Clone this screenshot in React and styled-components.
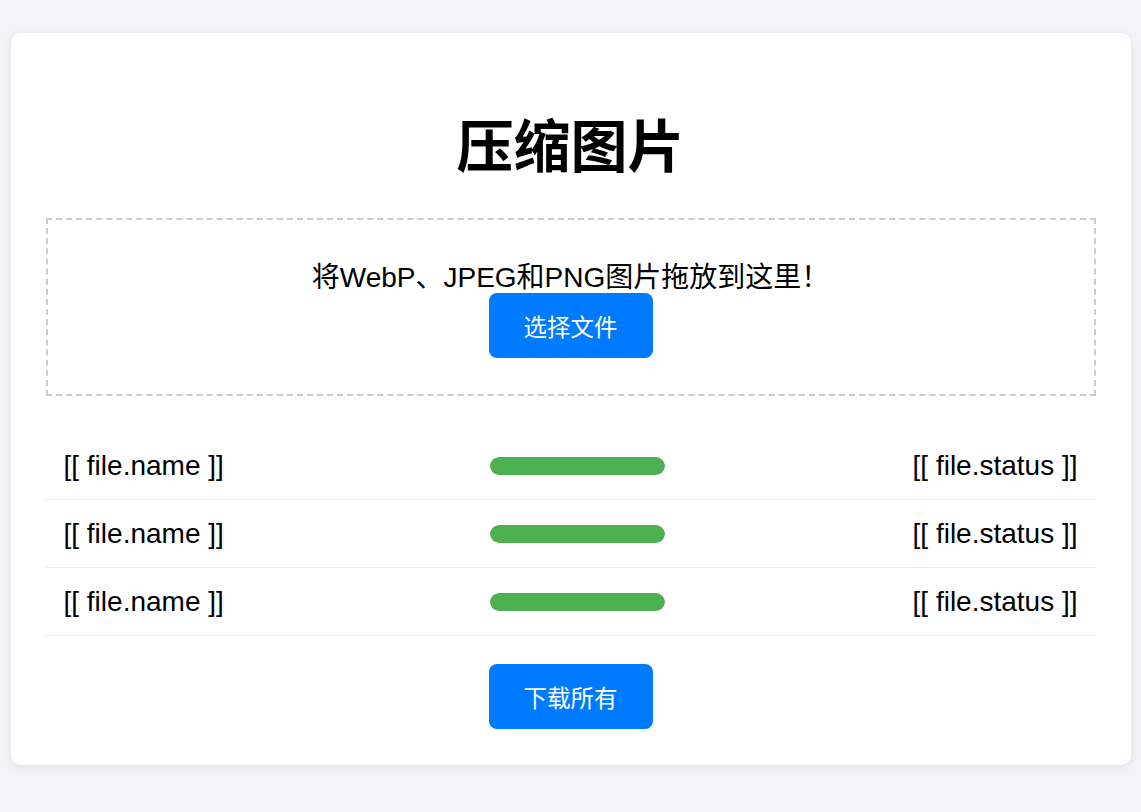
import React from "react";
import styled, { createGlobalStyle } from "styled-components";

const Global = createGlobalStyle`
  html, body {
    margin: 0;
    padding: 0;
    background: #f3f3f7;
  }
  body {
    font-family: "Liberation Sans", "Noto Sans CJK SC", sans-serif;
    color: #000;
  }
`;

const Page = styled.div`
  padding: 33px 0 47px;
`;

const Card = styled.main`
  width: 1120px;
  margin: 0 auto;
  box-sizing: border-box;
  background: #fff;
  border-radius: 10px;
  box-shadow: 0 2px 10px rgba(0, 0, 0, 0.08);
  padding: 45px 35px 36px;
  display: flex;
  flex-direction: column;
`;

const Title = styled.h1`
  margin: 30px 0 42px;
  font-family: "Noto Sans CJK SC", sans-serif;
  font-weight: 700;
  font-size: 57px;
  line-height: 68px;
  text-align: center;
`;

const DropZone = styled.section`
  border: 2px dashed #ccc;
  padding: 43px 20px 36px;
  display: flex;
  flex-direction: column;
  align-items: center;
`;

const DropText = styled.p`
  margin: 0;
  font-size: 28px;
  line-height: 30px;
`;

const Button = styled.button`
  width: 164px;
  height: 65px;
  border: none;
  border-radius: 8px;
  background: #007bff;
  color: #fff;
  font-family: "Noto Sans CJK SC", sans-serif;
  font-size: 23.5px;
  cursor: pointer;
  padding: 0;
`;

const FileList = styled.ul`
  list-style: none;
  margin: 36px 0 0;
  padding: 0;
`;

const Row = styled.li`
  display: grid;
  grid-template-columns: 426px 175px 1fr;
  align-items: center;
  height: 67px;
  padding: 0 18px;
  border-bottom: 1px solid #eee;
  font-size: 28px;
`;

const Name = styled.span``;

const Status = styled.span`
  text-align: right;
`;

const Track = styled.div`
  height: 18px;
  border-radius: 9px;
  background: #e0e0e0;
  overflow: hidden;
`;

const Fill = styled.div`
  height: 100%;
  background: #4caf50;
  border-radius: 9px;
`;

const Footer = styled.div`
  display: flex;
  justify-content: center;
  margin-top: 28px;
`;

const files = [
  { name: "[[ file.name ]]", status: "[[ file.status ]]", progress: 100 },
  { name: "[[ file.name ]]", status: "[[ file.status ]]", progress: 100 },
  { name: "[[ file.name ]]", status: "[[ file.status ]]", progress: 100 },
];

export default function App() {
  return (
    <Page>
      <Global />
      <Card>
        <Title>压缩图片</Title>
        <DropZone>
          <DropText>将WebP、JPEG和PNG图片拖放到这里！</DropText>
          <Button>选择文件</Button>
        </DropZone>
        <FileList>
          {files.map((f, i) => (
            <Row key={i}>
              <Name>{f.name}</Name>
              <Track>
                <Fill style={{ width: `${f.progress}%` }} />
              </Track>
              <Status>{f.status}</Status>
            </Row>
          ))}
        </FileList>
        <Footer>
          <Button>下载所有</Button>
        </Footer>
      </Card>
    </Page>
  );
}
